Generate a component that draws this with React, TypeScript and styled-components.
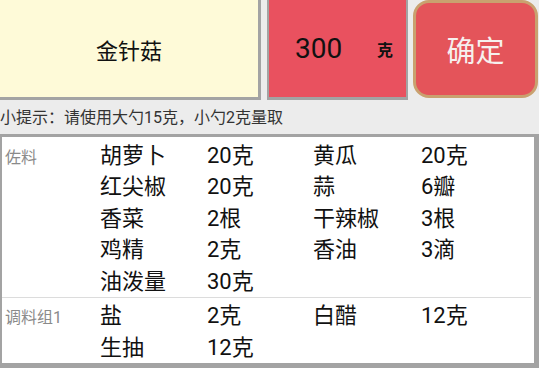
import React from "react";
import styled, { createGlobalStyle } from "styled-components";

const GlobalStyle = createGlobalStyle`
  html, body {
    margin: 0;
    padding: 0;
    background: #ececec;
    font-family: Roboto, "Noto Sans CJK SC", sans-serif;
  }
`;

const Page = styled.div`
  width: 539px;
  height: 368px;
  overflow: hidden;
  display: flex;
  flex-direction: column;
`;

const TopRow = styled.div`
  display: flex;
  height: 100px;
  align-items: flex-start;
`;

const NameBox = styled.div`
  box-sizing: border-box;
  width: 261px;
  height: 100px;
  background: #fefad8;
  border-right: 3px solid #a3a3a3;
  border-bottom: 3px solid #a3a3a3;
  display: flex;
  align-items: center;
  justify-content: center;
  font-size: 22px;
  color: #111;
`;

const WeightBox = styled.div`
  box-sizing: border-box;
  margin-left: 6px;
  width: 141px;
  height: 100px;
  background: #e9515f;
  border-left: 2px solid #a3a3a3;
  border-right: 2px solid #a3a3a3;
  border-bottom: 3px solid #a3a3a3;
  display: flex;
  align-items: center;
  padding-left: 26px;
`;

const WeightValue = styled.span`
  font-size: 28px;
  color: #111;
  width: 82px;
`;

const WeightUnit = styled.span`
  font-size: 16px;
  font-weight: bold;
  color: #111;
`;

const ConfirmButton = styled.button`
  box-sizing: border-box;
  margin-left: 5px;
  width: 125px;
  height: 98px;
  background: #e4545a;
  border: 3px solid #c9a16f;
  border-radius: 16px;
  color: #f6f0ee;
  font-family: Roboto, "Noto Sans CJK SC", sans-serif;
  font-size: 29px;
  display: flex;
  align-items: center;
  justify-content: center;
  padding: 0;
`;

const Hint = styled.div`
  height: 35px;
  display: flex;
  align-items: center;
  font-size: 16px;
  color: #333;
  padding-bottom: 2px;
  box-sizing: border-box;
  white-space: nowrap;
`;

const Panel = styled.div`
  box-sizing: border-box;
  flex: 1;
  background: #fff;
  border-top: 3px solid #a3a3a3;
  border-left: 2px solid #a3a3a3;
  border-right: 5px solid #a3a3a3;
  border-bottom: 5px solid #a3a3a3;
  display: flex;
  flex-direction: column;
  padding-top: 3px;
`;

const Group = styled.div<{ $divider?: boolean }>`
  display: grid;
  grid-template-columns: 98px 107px 106px 108px 1fr;
  border-top: ${(p) => (p.$divider ? "1px solid #dcdcdc" : "none")};
  padding-top: ${(p) => (p.$divider ? "2px" : "0")};
  margin-right: 3px;
`;

const GroupLabel = styled.div`
  grid-column: 1;
  grid-row: 1 / span 10;
  font-size: 16px;
  color: #8a8a8a;
  padding: 4px 0 0 3px;
`;

const Cell = styled.div`
  font-size: 22px;
  color: #111;
  height: 31.5px;
  line-height: 31.5px;
  white-space: nowrap;
`;

type Item = [string, string];

const groups: { label: string; items: Item[] }[] = [
  {
    label: "佐料",
    items: [
      ["胡萝卜", "20克"],
      ["黄瓜", "20克"],
      ["红尖椒", "20克"],
      ["蒜", "6瓣"],
      ["香菜", "2根"],
      ["干辣椒", "3根"],
      ["鸡精", "2克"],
      ["香油", "3滴"],
      ["油泼量", "30克"],
    ],
  },
  {
    label: "调料组1",
    items: [
      ["盐", "2克"],
      ["白醋", "12克"],
      ["生抽", "12克"],
    ],
  },
];

export default function App() {
  return (
    <Page>
      <GlobalStyle />
      <TopRow>
        <NameBox>金针菇</NameBox>
        <WeightBox>
          <WeightValue>300</WeightValue>
          <WeightUnit>克</WeightUnit>
        </WeightBox>
        <ConfirmButton>确定</ConfirmButton>
      </TopRow>
      <Hint>小提示：请使用大勺15克，小勺2克量取</Hint>
      <Panel>
        {groups.map((g, gi) => (
          <Group key={g.label} $divider={gi > 0}>
            <GroupLabel>{g.label}</GroupLabel>
            {g.items.map(([name, qty], i) => (
              <React.Fragment key={name}>
                <Cell style={{ gridColumn: i % 2 === 0 ? 2 : 4 }}>{name}</Cell>
                <Cell style={{ gridColumn: i % 2 === 0 ? 3 : 5 }}>{qty}</Cell>
              </React.Fragment>
            ))}
          </Group>
        ))}
      </Panel>
    </Page>
  );
}
